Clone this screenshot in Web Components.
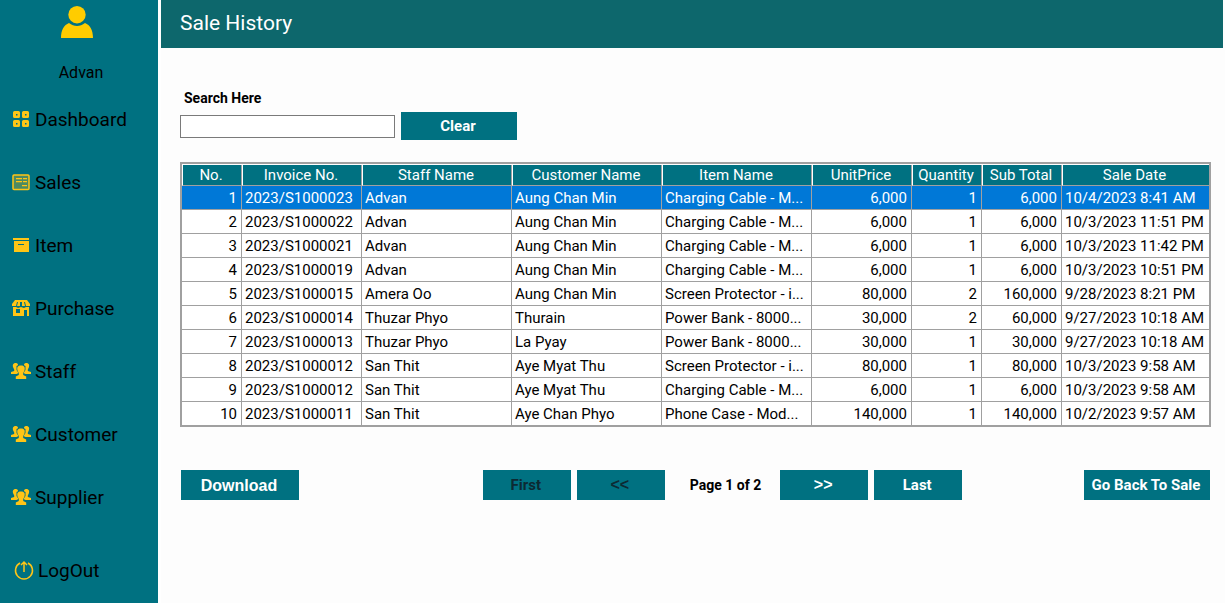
<!DOCTYPE html>
<html lang="en">
<head>
<meta charset="utf-8">
<title>Sale History</title>
<style>
  html, body { margin: 0; min-height: 100%; background: #fff; }
  body { font-family: Roboto, sans-serif; color: #000; }
</style>
</head>
<body>
<sale-app></sale-app>

<script>
const define = (name, html, setup) => {
  const template = document.createElement('template');
  template.innerHTML = html;
  customElements.define(name, class extends HTMLElement {
    constructor() {
      super();
      this.attachShadow({ mode: 'open' }).append(template.content.cloneNode(true));
    }
    connectedCallback() { if (setup) setup(this, this.shadowRoot); }
  });
};

const ICONS = {
  user: '<svg viewBox="0 0 32 32"><circle cx="16" cy="8.700" r="8.700"/><path d="M0 32c0-8 3-13 8-15 5 4 11 4 16 0 5 2 8 7 8 15z"/></svg>',
  grid: '<svg viewBox="0 0 20 20"><path fill-rule="evenodd" d="M3.500 2H7.500Q9 2 9 3.500V7.500Q9 9 7.500 9H3.500Q2 9 2 7.500V3.500Q2 2 3.500 2zM5 5v1.500h1.500V5zM12.500 2H16.500Q18 2 18 3.500V7.500Q18 9 16.500 9H12.500Q11 9 11 7.500V3.500Q11 2 12.500 2zM14 5v1.500h1.500V5zM3.500 11H7.500Q9 11 9 12.500V16.500Q9 18 7.500 18H3.500Q2 18 2 16.500V12.500Q2 11 3.500 11zM5 14v1.500h1.500V14zM12.500 11H16.500Q18 11 18 12.500V16.500Q18 18 16.500 18H12.500Q11 18 11 16.500V12.500Q11 11 12.500 11zM14 14v1.500h1.500V14z"/></svg>',
  receipt: '<svg viewBox="0 0 20 20"><rect x="2" y="3" width="16" height="14.500" rx="1" fill="#ffc516" fill-opacity=".3" stroke="#ffc516" stroke-width="1.500"/><path d="M5 6h6v1.300H5zM12 6h4v1.300h-4zM5 9h6v1.300H5zM12 9h4v1.300h-4zM11 13h5v1.300h-5z"/></svg>',
  box: '<svg viewBox="0 0 20 20"><path fill-rule="evenodd" d="M2 3h16v2H2zM3 6h15v11H3zM7 9v1h6V9z"/></svg>',
  store: '<svg viewBox="0 0 20 20"><path fill-rule="evenodd" d="M4 2h12l3 4v2h-4L14 4h-1l1 4h-3V4H9v4H6l1-4H6L5 8H1V6zM2 9h3l2 1 3-1 3 1 2-1h3v9h-2v-6h-3v6H2zM5 11v4h4v-4z"/></svg>',
  people: '<svg viewBox="0 0 20 20"><path d="M5 2C1.500 2 1.500 4.500 2.200 6.500L3.200 8.500v1.500L0 11v2h5.500l2-1-2-3V5L7 4.200C7 3 6.500 2 5 2zM15 2c3.500 0 3.500 2.500 2.800 4.500L16.800 8.500v1.500L20 11v2h-5.500l-2-1 2-3V5L13 4.200c0-1.200.500-2.200 2-2.200z"/><path d="M10 4.500c4 0 4 2.500 3.500 5L12.200 12v2l3 1.500V18H4.800v-2.500l3-1.500v-2L6.500 9.500c-.500-2.500-.500-5 3.500-5z"/></svg>',
  logout: '<svg viewBox="0 0 20 20"><path fill="none" stroke="#ffc516" stroke-width="1.500" d="M6 3A8.500 8.500 0 1 0 14 3M10 12V2M7 5l3-3 3 3"/></svg>'
};

define('app-icon', `
  <style>
    :host { display: block; width: 20px; height: 20px; fill: #ffc516; flex: none; }
    :host([name=user]) { width: 32px; height: 32px; fill: #ffcc00; }
    div, svg { display: block; width: 100%; height: 100%; }
  </style><div></div>`,
  (el, root) => { root.querySelector('div').innerHTML = ICONS[el.getAttribute('name')]; });

define('nav-item', `
  <style>
    :host { display: block; }
    a { display: flex; align-items: center; gap: 4px; height: 63px; padding-left: 11px;
        font-size: 19px; line-height: 24px; color: #000; text-decoration: none; }
    span { padding-bottom: 2px; }
    :host([last]) { padding: 10px 0 0 3px; }
  </style><a href="#"><span></span><slot></slot></a>`,
  (el, root) => {
    root.querySelector('span').innerHTML = `<app-icon name="${el.getAttribute('icon')}"></app-icon>`;
  });

define('side-nav', `
  <style>
    :host { display: block; background: #007181; }
    .user { display: flex; flex-direction: column; align-items: center; gap: 24px;
            padding: 6px 4px 0 0; font-size: 16px; line-height: 22px; }
    .name { padding-left: 8px; }
    nav { margin-top: 4px; }
  </style>
  <div class="user"><app-icon name="user"></app-icon><div class="name">Advan</div></div>
  <nav>
    <nav-item icon="grid">Dashboard</nav-item>
    <nav-item icon="receipt">Sales</nav-item>
    <nav-item icon="box">Item</nav-item>
    <nav-item icon="store">Purchase</nav-item>
    <nav-item icon="people">Staff</nav-item>
    <nav-item icon="people">Customer</nav-item>
    <nav-item icon="people">Supplier</nav-item>
    <nav-item icon="logout" last>LogOut</nav-item>
  </nav>`);

define('page-header', `
  <style>
    :host { display: block; background: #0d676c; color: #fff; margin-right: 2px; }
    h1 { margin: 0; padding: 0 19px 2px; font-size: 21px; font-weight: 400; line-height: 46px; }
  </style><h1><slot></slot></h1>`);

define('action-button', `
  <style>
    :host { display: block; width: 88px; }
    :host([size=s]) { width: 116px; }
    :host([size=m]) { width: 118px; }
    :host([size=l]) { width: 126px; }
    button { display: block; width: 100%; height: 30px; padding: 0 2px 0 0; border: 0; background: #007181;
             color: #fff; font: 700 15px/20px Roboto, sans-serif; white-space: nowrap; }
    :host([size=m]) button { padding: 2px 2px 0 0; }
    :host([size=s]) button { height: 28px; }
    :host([wide-face]) button { font: 700 16px/20px "Liberation Sans", sans-serif; }
    :host([arrow]) button { font: 700 16px/20px "Liberation Sans", sans-serif; }
    button:disabled { color: #0c2a33; }
  </style><button type="button"><slot></slot></button>`,
  (el, root) => { root.querySelector('button').disabled = el.hasAttribute('disabled'); });

define('search-bar', `
  <style>
    :host { display: block; }
    label { display: block; padding-left: 4px; font-size: 14px; font-weight: 700; line-height: 20px; }
    .row { display: flex; align-items: center; gap: 6px; margin-top: 4px; }
    input { box-sizing: border-box; width: 215px; height: 23px; border: 1px solid #7a7a7a; padding: 0 4px;
            background: #fff; font: 14px/20px Roboto, sans-serif; border-radius: 0; }
  </style>
  <label for="q">Search Here</label>
  <div class="row"><input id="q" type="text"><action-button size="s">Clear</action-button></div>`);

const HEADS = ['No.', 'Invoice No.', 'Staff Name', 'Customer Name', 'Item Name', 'UnitPrice', 'Quantity', 'Sub Total', 'Sale Date'];
const SALES = [
  ['2023/S1000023', 'Advan', 'Aung Chan Min', 'Charging Cable - M...', '6,000', '1', '6,000', '10/4/2023 8:41 AM'],
  ['2023/S1000022', 'Advan', 'Aung Chan Min', 'Charging Cable - M...', '6,000', '1', '6,000', '10/3/2023 11:51 PM'],
  ['2023/S1000021', 'Advan', 'Aung Chan Min', 'Charging Cable - M...', '6,000', '1', '6,000', '10/3/2023 11:42 PM'],
  ['2023/S1000019', 'Advan', 'Aung Chan Min', 'Charging Cable - M...', '6,000', '1', '6,000', '10/3/2023 10:51 PM'],
  ['2023/S1000015', 'Amera Oo', 'Aung Chan Min', 'Screen Protector - i...', '80,000', '2', '160,000', '9/28/2023 8:21 PM'],
  ['2023/S1000014', 'Thuzar Phyo', 'Thurain', 'Power Bank - 8000...', '30,000', '2', '60,000', '9/27/2023 10:18 AM'],
  ['2023/S1000013', 'Thuzar Phyo', 'La Pyay', 'Power Bank - 8000...', '30,000', '1', '30,000', '9/27/2023 10:18 AM'],
  ['2023/S1000012', 'San Thit', 'Aye Myat Thu', 'Screen Protector - i...', '80,000', '1', '80,000', '10/3/2023 9:58 AM'],
  ['2023/S1000012', 'San Thit', 'Aye Myat Thu', 'Charging Cable - M...', '6,000', '1', '6,000', '10/3/2023 9:58 AM'],
  ['2023/S1000011', 'San Thit', 'Aye Chan Phyo', 'Phone Case - Mod...', '140,000', '1', '140,000', '10/2/2023 9:57 AM']
];
const WIDTHS = [60, 120, 150, 150, 150, 100, 70, 80];
const NUMERIC = [0, 5, 6, 7];

define('sale-table', `
  <style>
    :host { display: block; border: 2px solid #a0a0a0; background: #fff; padding-top: 1px; }
    table { width: 100%; table-layout: fixed; border-collapse: separate; border-spacing: 0;
            font-size: 15px; line-height: 18px; }
    th { height: 20px; padding: 0 3px 0 0; background: #007181; color: #fff; font-weight: 400;
         border-left: 1px solid #fff; border-bottom: 1px solid #a0a0a0; white-space: nowrap; }
    th:not(:last-child) { border-right: 1px solid #a0a0a0; padding-right: 2px; }
    td { height: 23px; padding: 0 3px; border-right: 1px solid #a0a0a0; border-bottom: 1px solid #a0a0a0;
         white-space: nowrap; overflow: hidden; }
    td.n { text-align: right; padding-right: 4px; }
    td:last-child { border-right: 0; }
    tr:last-child td { border-bottom: 0; }
    tr[aria-selected] td { background: #0078d7; color: #fff; }
  </style>
  <table><colgroup></colgroup><thead><tr></tr></thead><tbody></tbody></table>`,
  (el, root) => {
    root.querySelector('colgroup').innerHTML = WIDTHS.map(w => `<col style="width:${w}px">`).join('') + '<col>';
    root.querySelector('thead tr').innerHTML = HEADS.map(h => `<th scope="col">${h}</th>`).join('');
    root.querySelector('tbody').innerHTML = SALES.map((sale, i) =>
      `<tr${i ? '' : ' aria-selected="true"'}>` + [i + 1, ...sale].map((v, c) =>
        `<td${NUMERIC.includes(c) ? ' class="n"' : ''}>${v}</td>`).join('') + '</tr>').join('');
  });

define('table-footer', `
  <style>
    :host { display: flex; justify-content: space-between; align-items: center; }
    .pager { display: flex; align-items: center; gap: 6px; margin-left: 62px; }
    .page { padding: 0 13px 0 19px; font-size: 14px; font-weight: 700; line-height: 20px; white-space: nowrap; }
  </style>
  <action-button size="m" wide-face>Download</action-button>
  <div class="pager">
    <action-button disabled>First</action-button>
    <action-button disabled arrow>&lt;&lt;</action-button>
    <div class="page">Page 1 of 2</div>
    <action-button arrow>&gt;&gt;</action-button>
    <action-button>Last</action-button>
  </div>
  <action-button size="l">Go Back To Sale</action-button>`);

define('sale-app', `
  <style>
    :host { display: grid; grid-template-columns: 158px minmax(0, 1fr); column-gap: 3px; min-height: 100vh; }
    main { background: #fdfdfd; }
    .body { padding: 40px 14px 0 19px; }
    sale-table { margin-top: 22px; }
    table-footer { margin: 43px 1px 0; }
  </style>
  <side-nav></side-nav>
  <main>
    <page-header>Sale History</page-header>
    <div class="body">
      <search-bar></search-bar>
      <sale-table></sale-table>
      <table-footer></table-footer>
    </div>
  </main>`);
</script>
</body>
</html>
